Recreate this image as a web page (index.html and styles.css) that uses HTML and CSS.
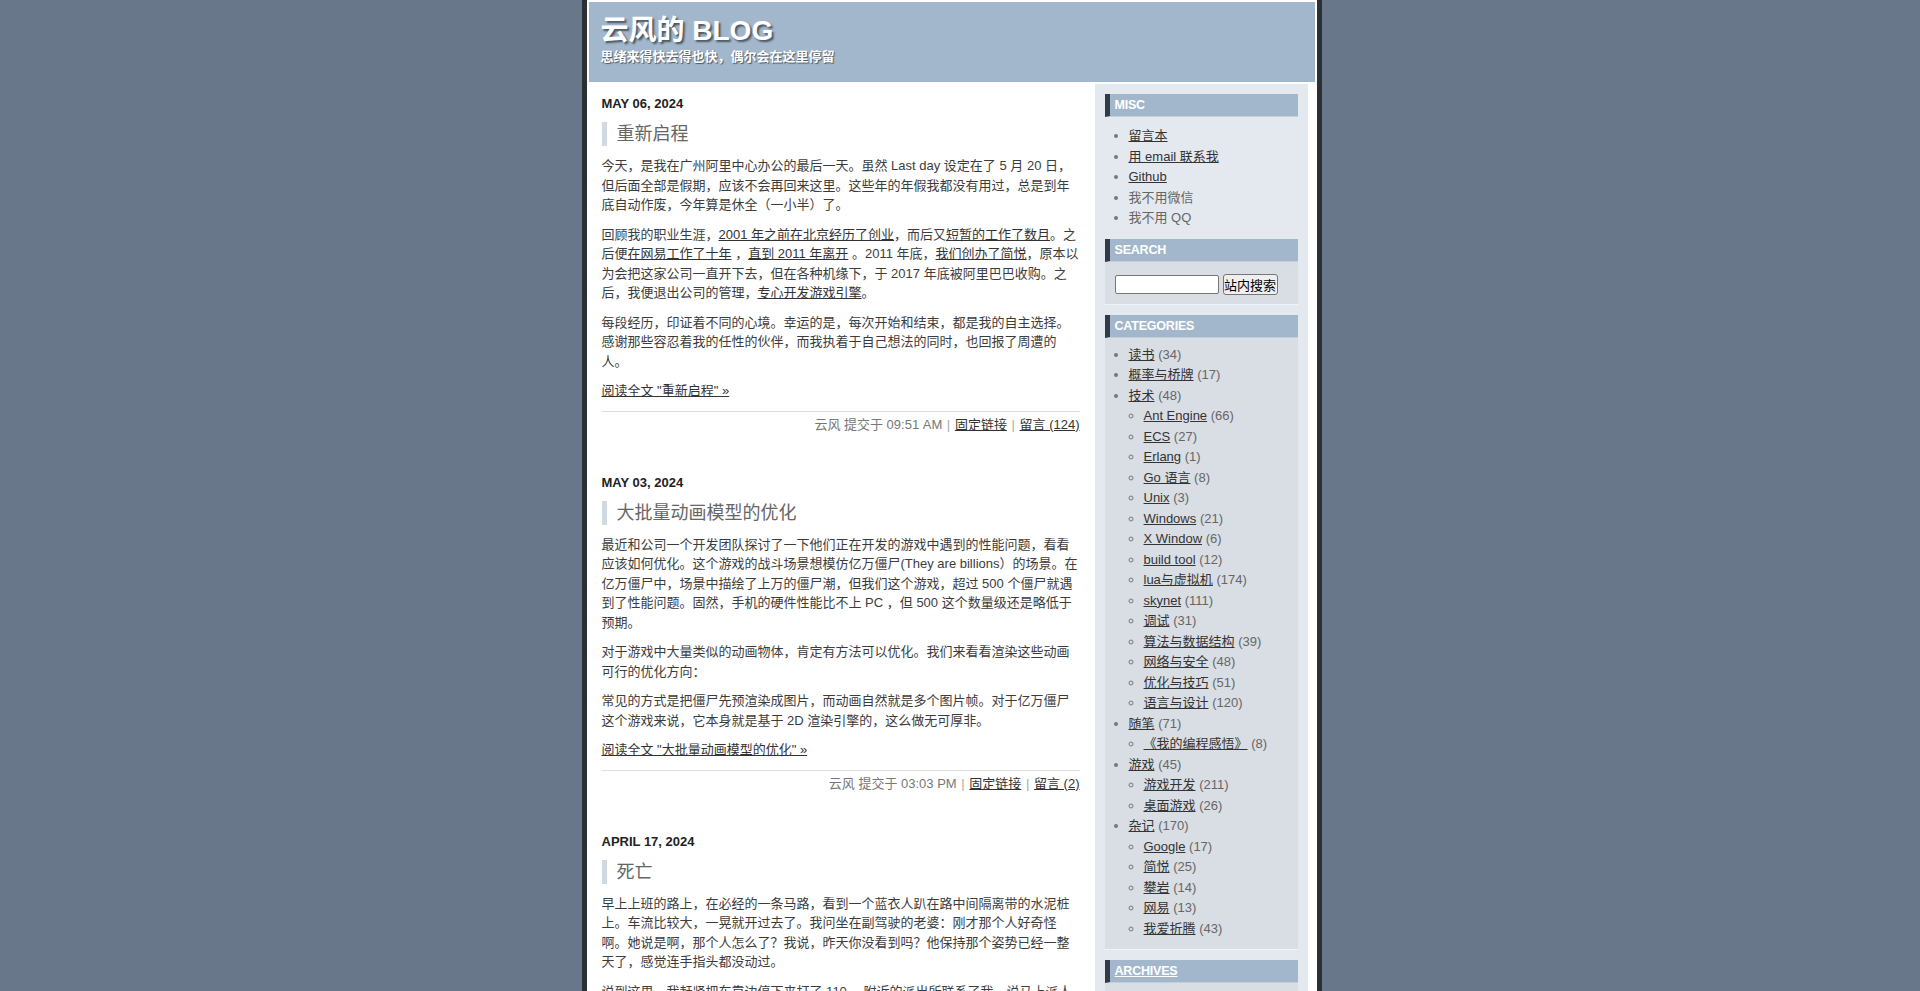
FILE: index.html
```html
<!DOCTYPE html>
<html lang="zh-CN">

<head>
	<meta charset="UTF-8">
	<meta name="viewport" content="width=device-width, initial-scale=1.0">
	<title>云风的 BLOG</title>
	<link rel="stylesheet" href="styles.css">
</head>

<body>

	<div class="page">
		<div class="header">
			<h1 class="blog-title">云风的 BLOG</h1>
			<div class="blog-desc">思绪来得快去得也快，偶尔会在这里停留</div>
		</div>

		<div class="content">
			<div class="main">

				<div class="post">
					<h3 class="post-date">MAY 06, 2024</h3>
					<h2 class="post-title">重新启程</h2>
					<div class="post-body">
						<p>今天，是我在广州阿里中心办公的最后一天。虽然 Last day 设定在了 5 月 20 日，但后面全部是假期，应该不会再回来这里。这些年的年假我都没有用过，总是到年底自动作废，今年算是休全（一小半）了。</p>
						<p>回顾我的职业生涯，<a href="#">2001 年之前在北京经历了创业</a>，而后又<a href="#">短暂的工作了数月</a>。之后便<a href="#">在网易工作了十年</a> ，<a href="#">直到 2011 年离开</a> 。2011 年底，<a href="#">我们创办了简悦</a>，原本以为会把这家公司一直开下去，但在各种机缘下，于 2017 年底被阿里巴巴收购。之后，我便退出公司的管理，<a href="#">专心开发游戏引擎</a>。</p>
						<p>每段经历，印证着不同的心境。幸运的是，每次开始和结束，都是我的自主选择。感谢那些容忍着我的任性的伙伴，而我执着于自己想法的同时，也回报了周遭的人。</p>
					</div>
					<p class="more"><a href="#">阅读全文 "重新启程" »</a></p>
					<div class="post-footer">云风 提交于 09:51 AM <span class="sep">|</span> <a href="#">固定链接</a> <span class="sep">|</span> <a href="#">留言 (124)</a></div>
				</div>

				<div class="post">
					<h3 class="post-date">MAY 03, 2024</h3>
					<h2 class="post-title">大批量动画模型的优化</h2>
					<div class="post-body">
						<p>最近和公司一个开发团队探讨了一下他们正在开发的游戏中遇到的性能问题，看看应该如何优化。这个游戏的战斗场景想模仿亿万僵尸(They are billions）的场景。在亿万僵尸中，场景中描绘了上万的僵尸潮，但我们这个游戏，超过 500 个僵尸就遇到了性能问题。固然，手机的硬件性能比不上 PC ，但 500 这个数量级还是略低于预期。</p>
						<p>对于游戏中大量类似的动画物体，肯定有方法可以优化。我们来看看渲染这些动画可行的优化方向：</p>
						<p>常见的方式是把僵尸先预渲染成图片，而动画自然就是多个图片帧。对于亿万僵尸这个游戏来说，它本身就是基于 2D 渲染引擎的，这么做无可厚非。</p>
					</div>
					<p class="more"><a href="#">阅读全文 "大批量动画模型的优化" »</a></p>
					<div class="post-footer">云风 提交于 03:03 PM <span class="sep">|</span> <a href="#">固定链接</a> <span class="sep">|</span> <a href="#">留言 (2)</a></div>
				</div>

				<div class="post">
					<h3 class="post-date">APRIL 17, 2024</h3>
					<h2 class="post-title">死亡</h2>
					<div class="post-body">
						<p>早上上班的路上，在必经的一条马路，看到一个蓝衣人趴在路中间隔离带的水泥桩上。车流比较大，一晃就开过去了。我问坐在副驾驶的老婆：刚才那个人好奇怪啊。她说是啊，那个人怎么了？我说，昨天你没看到吗？他保持那个姿势已经一整天了，感觉连手指头都没动过。</p>
						<p>说到这里，我赶紧把车靠边停下来打了 110 。附近的派出所联系了我，说马上派人过去看看。过了一会儿，警察打电话回来，说那个人已经走了。</p>
						<p>我一直在想，如果昨天就有人停下来问一句，结果会不会不一样。</p>
					</div>
					<p class="more"><a href="#">阅读全文 "死亡" »</a></p>
					<div class="post-footer">云风 提交于 10:12 AM <span class="sep">|</span> <a href="#">固定链接</a> <span class="sep">|</span> <a href="#">留言 (31)</a></div>
				</div>

			</div>

			<div class="sidebar">
				<div class="widget">
					<h2 class="widget-title">Misc</h2>
					<ul class="misc-list">
						<li><a href="#">留言本</a></li>
						<li><a href="#">用 email 联系我</a></li>
						<li><a href="#">Github</a></li>
						<li>我不用微信</li>
						<li>我不用 QQ</li>
					</ul>
				</div>

				<div class="widget">
					<h2 class="widget-title">Search</h2>
					<div class="widget-body search-body">
						<input class="search-input" type="text">
						<button class="search-btn">站内搜索</button>
					</div>
				</div>

				<div class="widget">
					<h2 class="widget-title">Categories</h2>
					<div class="widget-body cat-body">
						<ul>
							<li><a href="#">读书</a> <span class="num">(34)</span></li>
							<li><a href="#">概率与桥牌</a> <span class="num">(17)</span></li>
							<li><a href="#">技术</a> <span class="num">(48)</span>
								<ul>
									<li><a href="#">Ant Engine</a> <span class="num">(66)</span></li>
									<li><a href="#">ECS</a> <span class="num">(27)</span></li>
									<li><a href="#">Erlang</a> <span class="num">(1)</span></li>
									<li><a href="#">Go 语言</a> <span class="num">(8)</span></li>
									<li><a href="#">Unix</a> <span class="num">(3)</span></li>
									<li><a href="#">Windows</a> <span class="num">(21)</span></li>
									<li><a href="#">X Window</a> <span class="num">(6)</span></li>
									<li><a href="#">build tool</a> <span class="num">(12)</span></li>
									<li><a href="#">lua与虚拟机</a> <span class="num">(174)</span></li>
									<li><a href="#">skynet</a> <span class="num">(111)</span></li>
									<li><a href="#">调试</a> <span class="num">(31)</span></li>
									<li><a href="#">算法与数据结构</a> <span class="num">(39)</span></li>
									<li><a href="#">网络与安全</a> <span class="num">(48)</span></li>
									<li><a href="#">优化与技巧</a> <span class="num">(51)</span></li>
									<li><a href="#">语言与设计</a> <span class="num">(120)</span></li>
								</ul>
							</li>
							<li><a href="#">随笔</a> <span class="num">(71)</span>
								<ul>
									<li><a href="#">《我的编程感悟》</a> <span class="num">(8)</span></li>
								</ul>
							</li>
							<li><a href="#">游戏</a> <span class="num">(45)</span>
								<ul>
									<li><a href="#">游戏开发</a> <span class="num">(211)</span></li>
									<li><a href="#">桌面游戏</a> <span class="num">(26)</span></li>
								</ul>
							</li>
							<li><a href="#">杂记</a> <span class="num">(170)</span>
								<ul>
									<li><a href="#">Google</a> <span class="num">(17)</span></li>
									<li><a href="#">简悦</a> <span class="num">(25)</span></li>
									<li><a href="#">攀岩</a> <span class="num">(14)</span></li>
									<li><a href="#">网易</a> <span class="num">(13)</span></li>
									<li><a href="#">我爱折腾</a> <span class="num">(43)</span></li>
								</ul>
							</li>
						</ul>
					</div>
				</div>

				<div class="widget">
					<h2 class="widget-title"><a href="#">Archives</a></h2>
					<div class="widget-body cat-body">
						<ul>
							<li><a href="#">2024 年 05 月</a></li>
							<li><a href="#">2024 年 04 月</a></li>
							<li><a href="#">2024 年 03 月</a></li>
							<li><a href="#">2024 年 02 月</a></li>
							<li><a href="#">2024 年 01 月</a></li>
						</ul>
					</div>
				</div>
			</div>
		</div>
	</div>

</body>

</html>
```

FILE: styles.css
```css
body {
	margin: 0;
	padding-right: 17px;
	background-color: #68778a;
	font-family: "Liberation Sans", "Noto Sans CJK SC", sans-serif;
	font-size: 13px;
	color: #3c3c3c;
}

a {
	color: #333;
}

.page {
	width: 726px;
	margin: 0 auto;
	padding: 2px;
	background-color: #fff;
	border-left: 5px solid #2b3035;
	border-right: 5px solid #2b3035;
}

/* header */
.header {
	height: 80px;
	box-sizing: border-box;
	padding: 12px 12px 0;
	background-color: #a3b7cc;
}

.blog-title {
	margin: 0;
	font-size: 28px;
	line-height: 34px;
	font-weight: bold;
	color: #fff;
	text-shadow: 2px 2px 2px #4a5663;
}

.blog-desc {
	font-size: 13px;
	line-height: 18px;
	font-weight: bold;
	color: #fff;
	text-shadow: 1px 1px 1px #4a5663;
}

.content {
	display: flex;
	margin-top: 2px;
}

/* posts */
.main {
	flex: 1;
	min-width: 0;
	padding: 10px 15px 20px 13px;
}

.post {
	margin-bottom: 38px;
}

.post-date {
	margin: 0;
	font-size: 13px;
	line-height: 20px;
	font-weight: bold;
	color: #222;
}

.post-title {
	margin: 8px 0 0;
	padding-left: 10px;
	border-left: 5px solid #d3d9e0;
	font-size: 18px;
	line-height: 24px;
	font-weight: normal;
	color: #666;
}

.post-body p,
.more {
	margin: 10px 0;
	line-height: 19.5px;
}

.post-footer {
	margin-top: 10px;
	padding-top: 3px;
	border-top: 1px solid #d9dee3;
	text-align: right;
	line-height: 20px;
	color: #777;
}

.sep {
	color: #aaa;
	margin: 0 1px;
}

/* sidebar */
.sidebar {
	width: 193px;
	padding: 10px;
	margin-right: 7px;
	background-color: #e4e9ef;
}

.widget {
	margin-bottom: 10px;
}

.widget-title {
	margin: 0;
	padding-left: 5px;
	background-color: #a3b7cc;
	border-left: 5px solid #2f3b47;
	border-bottom: 1px solid #c4cfda;
	font-size: 12.5px;
	line-height: 22px;
	font-weight: bold;
	letter-spacing: -0.2px;
	text-transform: uppercase;
	color: #fff;
}

.widget-title a {
	color: #fff;
}

.widget ul {
	margin: 0;
	padding-left: 24px;
	line-height: 20.5px;
	color: #666;
}

.widget ul ul {
	padding-left: 15px;
	list-style: circle;
}

.widget li::marker {
	color: #777;
}

.misc-list {
	padding-top: 9px !important;
}

.widget-body {
	background-color: #d9dee4;
	border-bottom: 1px solid #f1f3f6;
}

.search-body {
	display: flex;
	align-items: center;
	padding: 12px 10px 9px;
}

.search-input {
	width: 104px;
	height: 19px;
	box-sizing: border-box;
	margin: 0;
	border: 1px solid #767676;
	border-radius: 2px;
	background-color: #fff;
}

.search-btn {
	width: 55px;
	height: 21px;
	margin: 0 0 0 4px;
	padding: 0;
	border: 1px solid #767676;
	border-radius: 3px;
	background-color: #efefef;
	font-family: "Liberation Sans", "Noto Sans CJK SC", sans-serif;
	font-size: 13px;
	color: #000;
}

.cat-body {
	padding: 7px 0 10px;
}

.num {
	color: #666;
}
```
